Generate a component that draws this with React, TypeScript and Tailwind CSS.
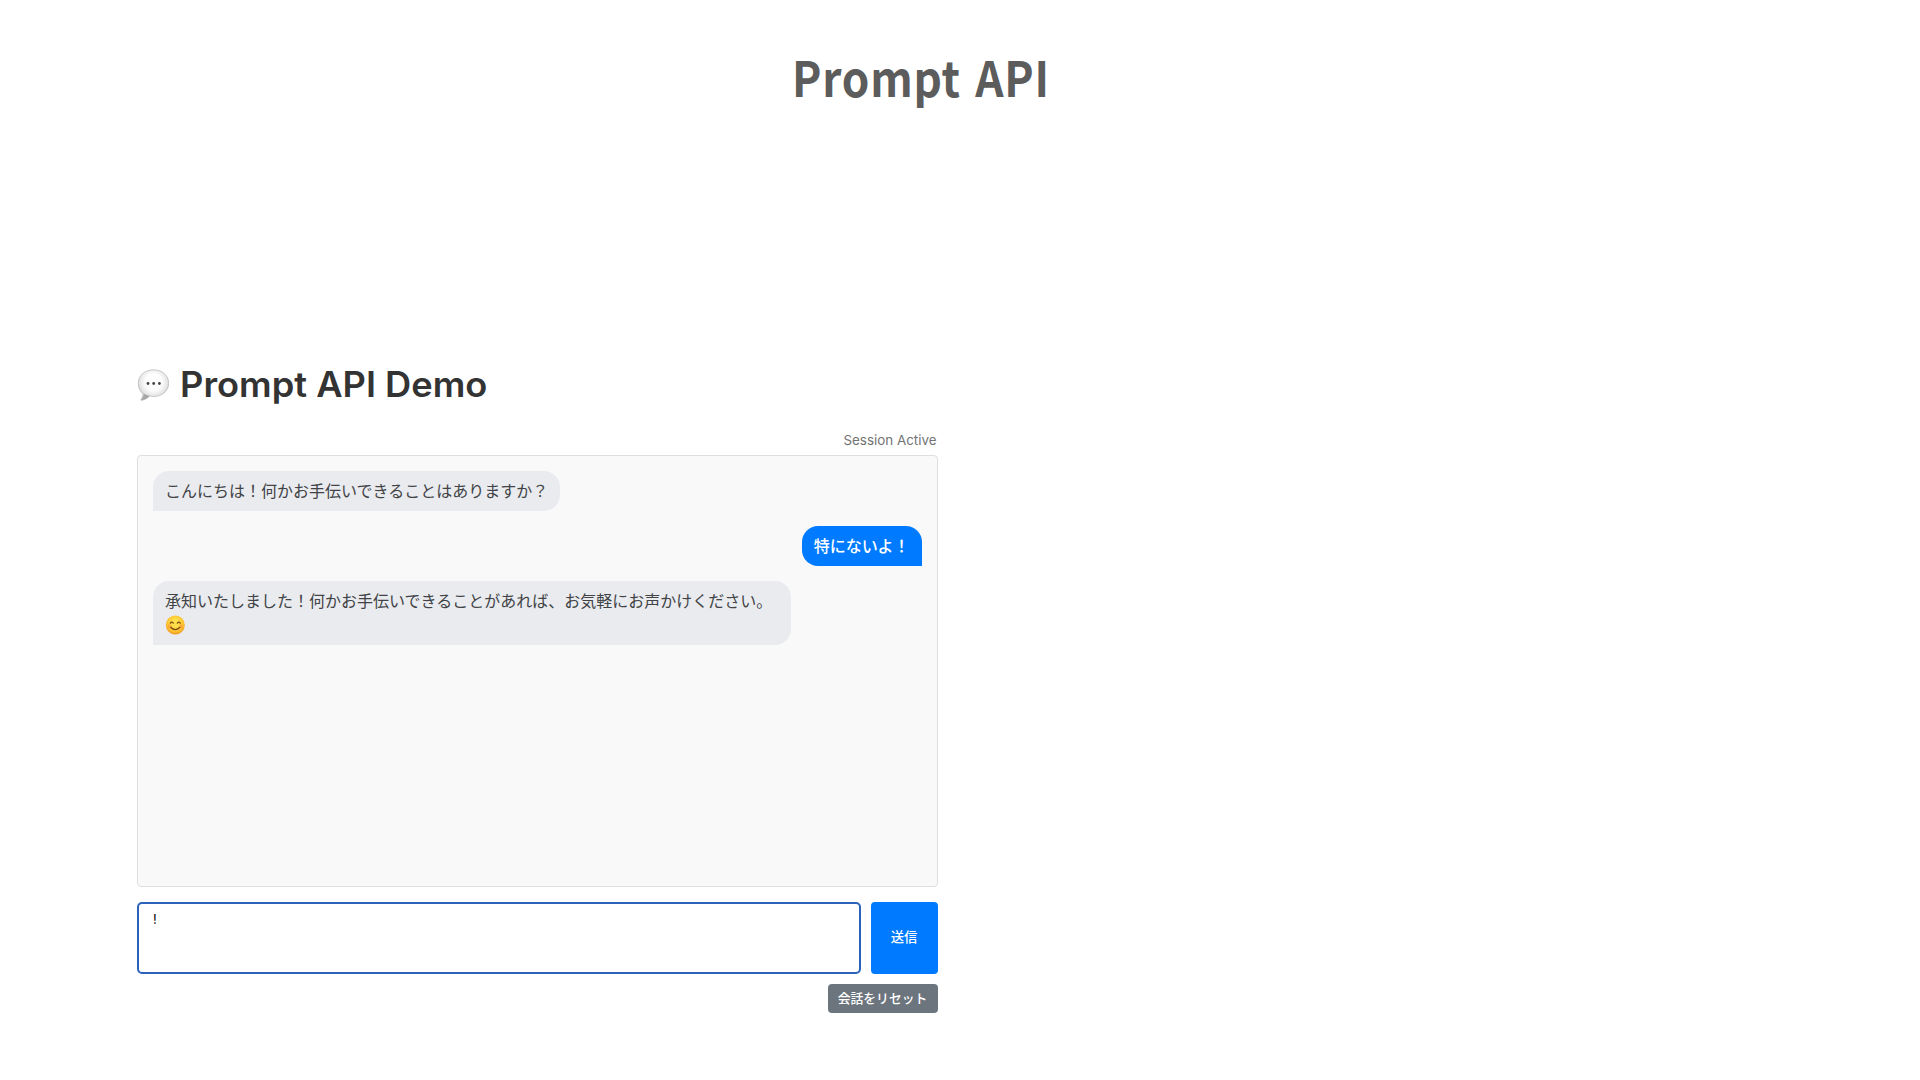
import { useState } from "react";

type Message = {
    role: "assistant" | "user";
    text: string;
    emoji?: boolean;
};

const messages: Message[] = [
    { role: "assistant", text: "こんにちは！何かお手伝いできることはありますか？" },
    { role: "user", text: "特にないよ！" },
    { role: "assistant", text: "承知いたしました！何かお手伝いできることがあれば、お気軽にお声かけください。", emoji: true },
];

function SpeechBalloon() {
    return (
        <svg className="mt-0.5 h-8 w-8 shrink-0" viewBox="0 0 32 32" aria-hidden="true">
            <defs>
                <radialGradient id="balloon" cx="0.5" cy="0.4" r="0.6">
                    <stop offset="0.45" stopColor="#fdfdfd" />
                    <stop offset="0.75" stopColor="#e6e6e6" />
                    <stop offset="1" stopColor="#adadad" />
                </radialGradient>
            </defs>
            <path
                d="M16.5 0.8C7.8 0.8 1.3 6.4 1.3 14.2c0 4.6 1.7 8.1 4.6 10.5 0.2 2.3-0.5 4.2-1.8 5.7-0.4 0.5 0 1.1 0.7 0.9 3.2-0.6 5.7-2.1 7.7-4.2 1.3 0.3 2.6 0.4 4 0.4 8.7 0 15.2-5.6 15.2-13.3S25.2 0.8 16.5 0.8Z"
                fill="url(#balloon)"
                stroke="#bdbdbd"
                strokeWidth="0.8"
            />
            <path d="M4.5 31.2c3.2-0.6 5.9-2.1 8-4.2l-5.7-2c0.2 2.6-0.7 4.7-2.3 6.2Z" fill="#a6a6a6" />
            <circle cx="11" cy="14.5" r="1.4" fill="#444" />
            <circle cx="16.7" cy="14.5" r="1.4" fill="#444" />
            <circle cx="22.4" cy="14.5" r="1.4" fill="#444" />
        </svg>
    );
}

function SmileFace() {
    return (
        <svg className="h-5 w-5" viewBox="0 0 20 20" aria-hidden="true">
            <defs>
                <radialGradient id="face" cx="0.5" cy="0.4" r="0.6">
                    <stop offset="0.3" stopColor="#ffe04a" />
                    <stop offset="0.75" stopColor="#fdc02f" />
                    <stop offset="1" stopColor="#ee9420" />
                </radialGradient>
            </defs>
            <circle cx="10.3" cy="10" r="9.5" fill="url(#face)" />
            <circle cx="4.6" cy="11.3" r="2" fill="#f98a3c" opacity="0.45" />
            <circle cx="16" cy="11.3" r="2" fill="#f98a3c" opacity="0.45" />
            <path d="M5.3 8.3q1.5-2.4 3 0M12.3 8.3q1.5-2.4 3 0M5.6 12.3q4.7 4.6 9.4 0" fill="none" stroke="#7d4a13" strokeWidth="1.2" strokeLinecap="round" />
        </svg>
    );
}

function Bubble({ message }: { message: Message }) {
    if (message.role === "user") {
        return (
            <div className="self-end rounded-2xl rounded-br-none bg-[#007bff] px-3 pt-[7px] pb-[9px] font-medium text-white">
                {message.text}
            </div>
        );
    }

    return (
        <div
            className={`self-start rounded-2xl rounded-bl-none bg-[#e9ebef] px-3 pt-[7px] pb-[9px] text-[#414346] ${message.emoji ? "w-[638px]" : ""}`}
        >
            {message.text}
            {message.emoji && (
                <div className="flex h-6 items-center pt-0.5">
                    <SmileFace />
                </div>
            )}
        </div>
    );
}

export default function App() {
    const [input, setInput] = useState("!");

    return (
        <div className="h-screen w-full overflow-hidden bg-white font-['Inter','Noto_Sans_CJK_JP',sans-serif]">
            <h1 className="pt-10 pl-[792px] font-['Noto_Sans_CJK_JP',sans-serif] text-[49px] leading-[72px] font-bold text-[#5c5c5c]">
                <span className="inline-block origin-left scale-x-[0.9] tracking-[0.9px] [word-spacing:4px]">Prompt API</span>
            </h1>

            <main className="mt-[248px] ml-[137px] w-[800.5px]">
                {/* Heading */}
                <h2 className="flex h-12 items-center gap-[10px] text-[35px] leading-[48px] font-semibold text-[#333]">
                    <SpeechBalloon />
                    <span className="origin-left scale-x-[1.035] pl-px">Prompt API Demo</span>
                </h2>

                <p className="mt-[22px] h-[25px] pr-px text-right text-[13.4px] leading-5 text-[#737373]">Session Active</p>

                {/* Chat history */}
                <div className="flex h-[432px] flex-col gap-[15px] rounded border-[1.5px] border-[#dfdfdf] bg-[#f9f9f9] p-[15px] font-['Noto_Sans_CJK_JP',sans-serif] text-base leading-6">
                    {messages.map((message) => (
                        <Bubble key={message.text} message={message} />
                    ))}
                </div>

                {/* Input row */}
                <div className="mt-[15px] flex h-[72px] gap-[10px]">
                    <textarea
                        value={input}
                        onChange={(e) => setInput(e.target.value)}
                        className="h-full flex-1 resize-none rounded-[5px] border-2 border-[#2b62ba] bg-white px-[14px] py-[5px] text-[13px] leading-5 text-black outline-none"
                    />
                    <button className="w-[67px] rounded bg-[#007bff] pb-0.5 font-['Noto_Sans_CJK_JP',sans-serif] text-[13.3px] leading-5 font-medium text-white">
                        送信
                    </button>
                </div>

                <div className="mt-[10px] flex justify-end">
                    <button className="h-[29px] w-[110px] rounded bg-[#6c757d] pb-0.5 font-['Noto_Sans_CJK_JP',sans-serif] text-[12.8px] leading-5 font-medium text-white">
                        会話をリセット
                    </button>
                </div>
            </main>
        </div>
    );
}
